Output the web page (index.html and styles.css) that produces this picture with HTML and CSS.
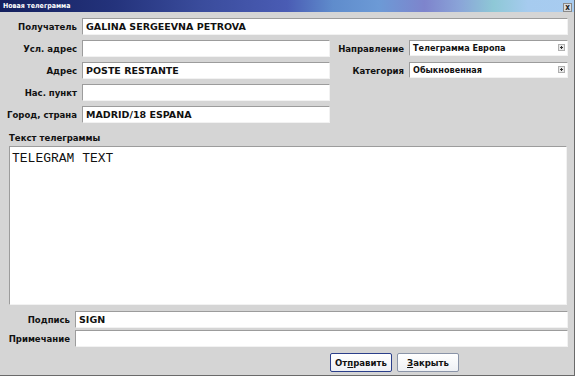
FILE: index.html
```html
<!DOCTYPE html>
<html lang="ru">
<head>
<meta charset="UTF-8">
<title>Новая телеграмма</title>
<link rel="stylesheet" href="styles.css">
</head>
<body>

<div class="window">

  <!-- title bar -->
  <div class="titlebar">
    <span class="title">Новая телеграмма</span>
    <span class="close">x</span>
  </div>

  <div class="content">

    <div class="top">
      <label class="lbl">Получатель</label>
      <div class="field wide">GALINA SERGEEVNA PETROVA</div>

      <label class="lbl">Усл. адрес</label>
      <div class="field"></div>
      <label class="lbl">Направление</label>
      <div class="field select">Телеграмма Европа<span class="arrow"></span></div>

      <label class="lbl">Адрес</label>
      <div class="field">POSTE RESTANTE</div>
      <label class="lbl">Категория</label>
      <div class="field select">Обыкновенная<span class="arrow"></span></div>

      <label class="lbl">Нас. пункт</label>
      <div class="field"></div>
      <div></div><div></div>

      <label class="lbl">Город, страна</label>
      <div class="field">MADRID/18 ESPANA</div>
    </div>

    <div class="text-label">Текст телеграммы</div>
    <div class="textbox">TELEGRAM TEXT</div>

    <div class="bottom">
      <label class="lbl">Подпись</label>
      <div class="field">SIGN</div>
      <label class="lbl">Примечание</label>
      <div class="field"></div>
    </div>

    <div class="buttons">
      <button class="btn default">От<u>п</u>равить</button>
      <button class="btn"><u>З</u>акрыть</button>
    </div>

  </div>
</div>

</body>
</html>
```

FILE: styles.css
```css
body {
  margin: 0;
  background: #fff;
  font-family: "DejaVu Sans", "Liberation Sans", sans-serif;
  font-stretch: condensed;
}

.window {
  width: 575px;
  height: 376px;
  background: #d5d5d5;
  border-right: 1px solid #6a6a6a;
  border-bottom: 1px solid #6a6a6a;
  box-sizing: border-box;
}

.titlebar {
  height: 12px;
  display: flex;
  align-items: center;
  justify-content: space-between;
  background: linear-gradient(to right,
    #14205e 0%, #24337c 20%, #3a4c9c 35%, #4a5cb4 50%,
    #5f8ccc 58%, #6c9ad6 66%, #7e84cc 74%, #8aa4d8 80%,
    #8ec8d6 86%, #a6cbef 92%, #a8ccf0 100%);
}

.title {
  color: #fff;
  font-size: 7px;
  font-weight: bold;
  padding-left: 3px;
}

.close {
  width: 9px;
  height: 9px;
  margin: 3px 2px 0 0;
  font-size: 8px;
  line-height: 8px;
  text-align: center;
  font-weight: bold;
  color: #222;
  background: #d8dce0;
  border: 1px solid #8a8a8a;
  box-sizing: border-box;
}

.content {
  padding: 6px 7px 0 0;
}

.lbl {
  font-size: 9.5px;
  font-weight: bold;
  color: #111;
  text-align: right;
  align-self: center;
  padding-right: 1px;
}

.field {
  height: 17px;
  box-sizing: border-box;
  background: #fff;
  border: 1px solid;
  border-color: #9c9c9c #f2f2f2 #f2f2f2 #9c9c9c;
  font-size: 9.5px;
  font-stretch: normal;
  font-weight: bold;
  line-height: 15px;
  padding-left: 3px;
  color: #111;
  white-space: nowrap;
}

.top {
  display: grid;
  grid-template-columns: 78px 248px 71px 159px;
  column-gap: 4px;
  row-gap: 5px;
}

.wide {
  grid-column: 2 / 5;
}

.select {
  display: flex;
  justify-content: space-between;
  height: 16px;
  line-height: 14px;
  font-size: 9px;
  font-stretch: condensed;
}

.arrow {
  width: 5px;
  height: 5px;
  margin: 3px 2px 0 0;
  border: 1px solid #b0b0b0;
  background: radial-gradient(circle, #333 30%, #e8e8e8 40%);
}

.text-label {
  font-size: 9.5px;
  font-weight: bold;
  color: #111;
  margin: 9px 0 3px 9px;
}

.textbox {
  margin-left: 9px;
  height: 159px;
  box-sizing: border-box;
  background: #fff;
  border: 1px solid;
  border-color: #9c9c9c #f2f2f2 #f2f2f2 #9c9c9c;
  font-family: "Liberation Mono", "Courier New", monospace;
  font-stretch: normal;
  font-size: 13px;
  padding: 4px 2px;
  color: #111;
}

.bottom {
  display: grid;
  grid-template-columns: 71px 493px;
  column-gap: 4px;
  row-gap: 2px;
  margin-top: 6px;
}

.buttons {
  display: flex;
  justify-content: flex-end;
  gap: 5px;
  margin: 6px 108px 0 0;
}

.btn {
  width: 62px;
  height: 19px;
  padding: 0;
  font-family: "DejaVu Sans", "Liberation Sans", sans-serif;
  font-stretch: condensed;
  font-size: 9.5px;
  font-weight: bold;
  color: #111;
  background: linear-gradient(#ffffff, #eef0f4);
  border: 1px solid #8a94a8;
  border-radius: 2px;
}

.btn.default {
  border-color: #2a3e8a;
}
```
